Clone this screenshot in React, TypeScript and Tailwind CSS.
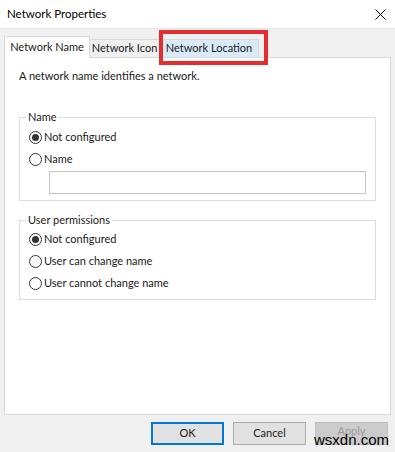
import React from "react";

const Radio: React.FC<{ checked?: boolean; label: string }> = ({ checked, label }) => (
  <div className="flex h-[22px] items-center">
    <span className="flex h-[13px] w-[13px] shrink-0 items-center justify-center rounded-full border border-[#333333] bg-white">
      {checked && <span className="h-[7px] w-[7px] rounded-full bg-[#333333]" />}
    </span>
    <span className="ml-[2px] whitespace-nowrap">{label}</span>
  </div>
);

const Group: React.FC<{ title: string; className?: string; children: React.ReactNode }> = ({
  title,
  className,
  children,
}) => (
  <div className={"relative border border-[#dcdcdc] " + (className || "")}>
    {/* legend sits on the top border */}
    <span className="absolute left-[6px] top-[-9px] bg-white px-[2px] leading-[16px]">{title}</span>
    {children}
  </div>
);

const App: React.FC = () => {
  return (
    <div className="relative h-[452px] w-[395px] bg-[#f0f0f0] text-[11px] text-[#1a1a1a] font-['Lato',sans-serif]">
      {/* title bar */}
      <div className="flex h-[29px] items-center justify-between border-b border-[#e6e6e6] bg-white pl-[7px] pr-[9px]">
        <span className="text-[11.5px] text-black">Network Properties</span>
        <svg width="11" height="11" viewBox="0 0 11 11">
          <path d="M0.5 0.5 L10.5 10.5 M10.5 0.5 L0.5 10.5" stroke="#000" strokeWidth="1" />
        </svg>
      </div>

      {/* tabs */}
      <div className="ml-[4px] mt-[7px] flex h-[21px] items-end">
        <div className="relative z-10 -mb-px flex h-[22px] w-[86px] shrink-0 items-center justify-center whitespace-nowrap border-x border-t border-[#d9d9d9] bg-white pb-[1px]">
          Network Name
        </div>
        <div className="flex h-[18px] w-[70px] shrink-0 items-center justify-center whitespace-nowrap border-t border-r border-[#d9d9d9] bg-[#f0f0f0]">
          Network Icon
        </div>
        <div className="flex h-[18px] w-[99px] shrink-0 items-center justify-center whitespace-nowrap border-t border-r border-[#d9d9d9] bg-[#d9ebf9]">
          Network Location
        </div>
      </div>

      {/* red highlight box */}
      <div className="absolute left-[159px] top-[30px] h-[35px] w-[109px] border-[4px] border-[#e42d2f]" />

      {/* panel */}
      <div className="mx-[4px] h-[358px] border border-[#d9d9d9] bg-white px-[14px] pt-[10px]">
        <div className="leading-[16px]">A network name identifies a network.</div>

        <Group title="Name" className="mt-[33px] h-[84px] pl-[9px] pr-[9px] pt-[8px]">
          <Radio checked label="Not configured" />
          <Radio label="Name" />
          <div className="ml-[20px] mt-[1px] h-[23px] border border-[#c4c4c4] bg-white" />
        </Group>

        <Group title="User permissions" className="mt-[19px] h-[80px] pl-[9px] pt-[7px]">
          <Radio checked label="Not configured" />
          <Radio label="User can change name" />
          <Radio label="User cannot change name" />
        </Group>
      </div>

      {/* buttons */}
      <div className="mt-[7px] flex justify-end gap-[9px] pr-[7px]">
        <button className="h-[23px] w-[73px] border-2 border-[#0078d7] bg-[#e1e1e1]">OK</button>
        <button className="h-[23px] w-[73px] border border-[#adadad] bg-[#e1e1e1]">Cancel</button>
        <button className="h-[23px] w-[73px] border border-[#bfbfbf] bg-[#cccccc] pb-[4px] text-[#9a9a9a]">Apply</button>
      </div>

      {/* watermark */}
      <span className="absolute left-[314px] top-[431px] text-[15px] leading-[18px] text-black font-['Liberation_Sans',sans-serif]">
        wsxdn.com
      </span>
    </div>
  );
};

export default App;
